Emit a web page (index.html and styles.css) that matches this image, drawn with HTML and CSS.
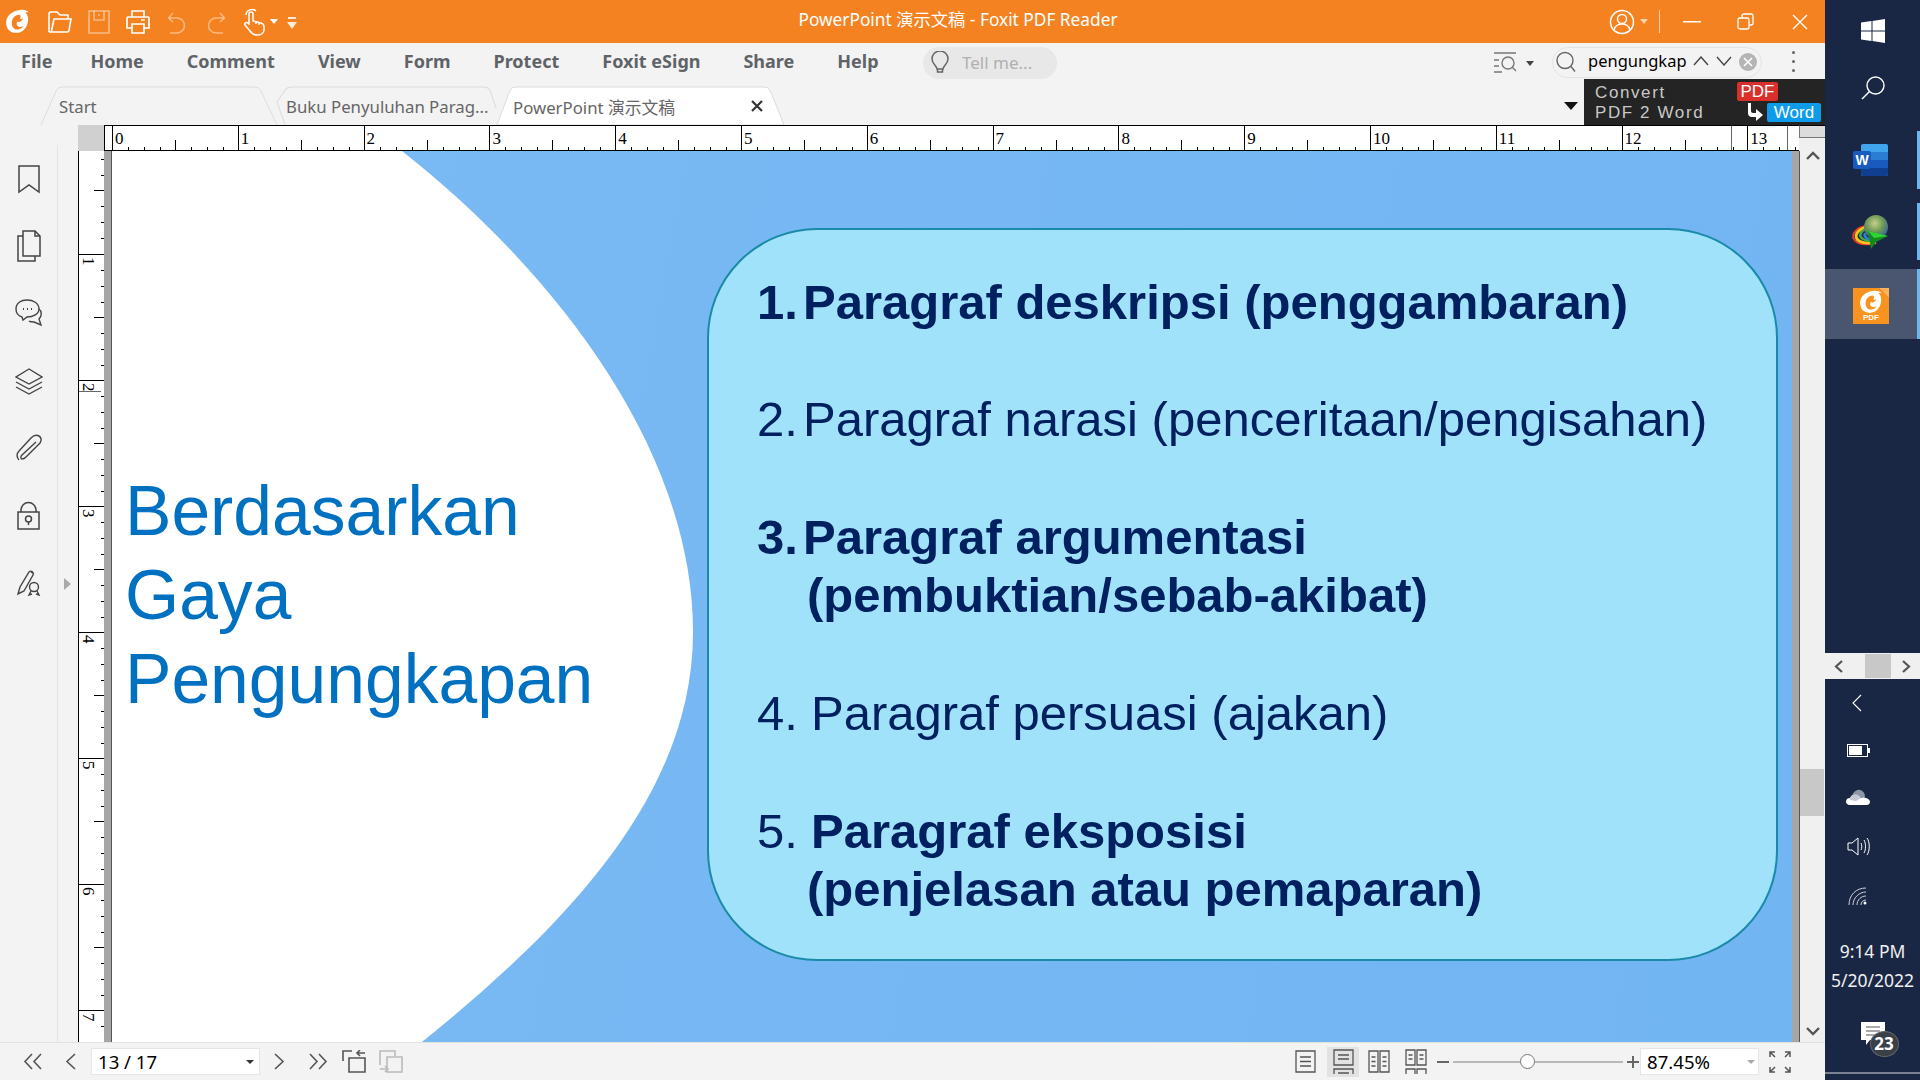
FILE: index.html
```html
<!DOCTYPE html>
<html>
<head>
    <meta charset="utf-8">
    <title>PowerPoint 演示文稿 - Foxit PDF Reader</title>
    <link rel="stylesheet" href="styles.css">
</head>
<body>
<div class="app">
    <!-- title bar -->
    <div class="titlebar">
        <div class="qat">
            <svg class="qa-logo" width="25" height="25" viewBox="1 2 22 22"><path fill="#fff" d="M13 3c4-1 7 0 9 2-2-.5-3 0-3 0 2 2 3 5 2 9-1 5-5 9-10 9-6 0-9-4-9-9C2 8 7 4 13 3z"/><path fill="#f58220" d="M14 7c-4 0-7 3-7 7s2 6 5 6c2 0 4-1 5-3-2 1-4 1-5 0s-1-3 0-4c2 1 4 0 5-3-1 1-2 1-3 1 1-2 1-3 0-4z"/></svg>
            <svg class="qa-folder" width="26" height="26" viewBox="0 0 26 26" fill="none" stroke="#fff" stroke-width="1.6"><path d="M2 23V5a2 2 0 0 1 2-2h6l3 3h8v4"/><path d="M2 23h18a2 2 0 0 0 2-1.500l2-11.500H7L4.500 22"/></svg>
            <svg class="qa-save" width="22" height="24" viewBox="0 0 22 24" fill="none" stroke="#fff" stroke-opacity=".45" stroke-width="1.6"><path d="M1 1h20v22H1z"/><path d="M6 1v9h10V1M10 5h2"/></svg>
            <svg class="qa-print" width="24" height="26" viewBox="0 0 24 26" fill="none" stroke="#fff" stroke-width="1.7"><path d="M6 8V2h12v6M6 19H1V9a1 1 0 0 1 1-1h20a1 1 0 0 1 1 1v10h-5"/><path d="M6 15h12v9H6zM15 11h4"/></svg>
            <svg class="qa-undo" width="20" height="24" viewBox="0 0 20 24" fill="none" stroke="#fff" stroke-opacity=".45" stroke-width="1.5"><path d="M2 8h8a7.500 7.500 0 0 1 0 15H3M6 3 1.500 8 6 12"/></svg>
            <svg class="qa-redo" width="20" height="24" viewBox="0 0 20 24" fill="none" stroke="#fff" stroke-opacity=".45" stroke-width="1.5"><path d="M18 8h-8a7.500 7.500 0 0 0 0 15h7M14 3l4.500 5L14 12"/></svg>
            <svg class="qa-hand" width="22" height="28" viewBox="0 0 22 28" fill="none" stroke="#fff" stroke-width="1.5"><path d="M6 17V6a2 2 0 0 1 4 0v7l8 2c2 .5 3 2 3 4v3c0 3-3 5-7 5-3 0-5-1-7-4l-5-6c-1-2 1-3 3-2l1 1"/><path d="M13 13v3M16 14v3M3 7a6 6 0 0 1 10-4"/></svg>
            <span class="caret-w"></span>
            <svg class="qa-more" width="10" height="12" viewBox="0 0 10 12" fill="#fff" fill-opacity=".85"><path d="M1 0h8v2H1zM0 5h10L5 12z"/></svg>
        </div>
        <div class="app-title">PowerPoint 演示文稿 - Foxit PDF Reader</div>
        <div class="win-btns">
            <svg width="26" height="26" viewBox="0 0 26 26" fill="none" stroke="#fff" stroke-width="1.5"><circle cx="13" cy="13" r="11.500"/><circle cx="13" cy="10" r="4.500"/><path d="M5 21c1-4 4-6 8-6s7 2 8 6"/></svg>
            <span class="caret-w faint"></span>
            <span class="win-sep"></span>
            <svg class="w-min" width="18" height="2" viewBox="0 0 18 2"><path fill="#fff" d="M0 0h18v1.500H0z"/></svg>
            <svg class="w-max" width="17" height="17" viewBox="0 0 17 17" fill="none" stroke="#fff" stroke-width="1.300"><rect x="1" y="5" width="11" height="11" rx="2"/><path d="M5 5V3a2 2 0 0 1 2-2h7a2 2 0 0 1 2 2v7a2 2 0 0 1-2 2h-2"/></svg>
            <svg class="w-close" width="16" height="16" viewBox="0 0 16 16" stroke="#fff" stroke-width="1.400"><path d="M1 1l14 14M15 1 1 15"/></svg>
        </div>
    </div>

    <!-- ribbon menu -->
    <div class="menubar">
        <nav class="menu">
            <a>File</a><a>Home</a><a>Comment</a><a>View</a><a>Form</a><a>Protect</a><a>Foxit eSign</a><a>Share</a><a>Help</a>
        </nav>
        <div class="tellme">
            <svg width="18" height="24" viewBox="0 0 18 24" fill="none" stroke="#666" stroke-width="1.500"><path d="M6 18c0-3-5-5-5-10a8 8 0 0 1 16 0c0 5-5 7-5 10zM6.500 18v3h5v-3"/></svg>
            <span>Tell me...</span>
        </div>
        <svg class="find-list" width="24" height="22" viewBox="0 0 24 22" fill="none" stroke="#777" stroke-width="1.400"><path d="M0 1h22M0 8h5M0 14h5M0 20h8"/><circle cx="14" cy="11" r="6"/><path d="M18.500 15.500 22 19"/></svg>
        <span class="caret-d"></span>
        <div class="searchbox">
            <svg width="20" height="22" viewBox="0 0 20 22" fill="none" stroke="#666" stroke-width="1.400"><circle cx="9" cy="9.500" r="8"/><path d="M15 15.500l4 5"/></svg>
            <span class="search-text">pengungkap</span>
            <svg class="chev-up" width="16" height="10" viewBox="0 0 16 10" fill="none" stroke="#444" stroke-width="1.400"><path d="M1 9l7-8 7 8"/></svg>
            <svg class="chev-dn" width="16" height="10" viewBox="0 0 16 10" fill="none" stroke="#444" stroke-width="1.400"><path d="M1 1l7 8 7-8"/></svg>
            <svg width="18" height="18" viewBox="0 0 18 18"><circle cx="9" cy="9" r="9" fill="#b4b4b4"/><path d="M5 5l8 8M13 5l-8 8" stroke="#fff" stroke-width="1.600"/></svg>
        </div>
        <div class="kebab"><i></i><i></i><i></i></div>
    </div>

    <!-- tabs -->
    <div class="tabbar">
        <div class="tab tab-start">
            <svg class="tab-bg" viewBox="0 0 243 39" preserveAspectRatio="none"><path d="M0 39 16 4q2-3 6-3h198q4 0 6 3l17 35" fill="none" stroke="#dcdcdc"/></svg>
            <span>Start</span>
        </div>
        <div class="tab tab-buku">
            <svg class="tab-bg" viewBox="0 0 216 39" preserveAspectRatio="none"><path d="M8 39 0 16 8 4q2-3 6-3h190q4 0 6 3l6 18" fill="none" stroke="#dcdcdc"/></svg>
            <span>Buku Penyuluhan Parag...</span>
        </div>
        <div class="tab tab-active">
            <svg class="tab-bg" viewBox="0 0 287 39" preserveAspectRatio="none"><path d="M0 39 13 4q2-3 6-3h248q4 0 6 3l14 35z" fill="#fff" stroke="#dcdcdc"/></svg>
            <span>PowerPoint 演示文稿</span>
            <svg class="tab-x" width="12" height="12" viewBox="0 0 12 12" stroke="#333" stroke-width="2.200"><path d="M1 1l10 10M11 1 1 11"/></svg>
        </div>
        <span class="tab-spacer"></span>
        <span class="tab-menu"></span>
        <div class="ad">
            <div class="ad-text"><span>Convert</span><span>PDF 2 Word</span></div>
            <span class="ad-pdf">PDF</span>
            <svg class="ad-arrow" width="17" height="18" viewBox="0 0 17 18" fill="#fff"><path d="M2 0h3v8c0 1 1 2 2 2h3V6l7 6-7 6v-4H6c-3 0-4-2-4-4z"/></svg>
            <span class="ad-word">Word</span>
        </div>
    </div>

    <!-- horizontal ruler row -->
    <div class="ruler-row">
        <span class="ruler-left"></span>
        <span class="ruler-corner"></span>
        <div class="hruler">
            <div class="hu">0</div><div class="hu">1</div><div class="hu">2</div><div class="hu">3</div>
            <div class="hu">4</div><div class="hu">5</div><div class="hu">6</div><div class="hu">7</div>
            <div class="hu">8</div><div class="hu">9</div><div class="hu">10</div><div class="hu">11</div>
            <div class="hu">12</div><div class="hu">13</div>
            <i class="hmark m1"></i><i class="hmark m2"></i>
        </div>
        <div class="scroll-head"><span></span></div>
    </div>

    <!-- document -->
    <div class="workspace">
        <aside class="sidebar">
            <svg width="24" height="30" viewBox="0 0 24 30" fill="none" stroke="#444" stroke-width="1.500"><path d="M2 2h20v26l-10-7-10 7z"/></svg>
            <svg width="24" height="32" viewBox="0 0 24 32" fill="none" stroke="#444" stroke-width="1.500"><path d="M6 1h12l5 5v20H6z"/><path d="M18 1v5h5M6 6H1v25h17v-5"/></svg>
            <svg width="28" height="28" viewBox="0 0 28 28" fill="none" stroke="#444" stroke-width="1.400"><path d="M12 1C6 1 1 4 1 10c0 4 3 7 6 8l1 3 4-3c6 0 12-3 12-8 0-6-6-9-12-9z"/><path d="M24 10c3 2 3 7 0 10l2 6-7-3c-2 0-4 0-5-1"/><path d="M8 10h1M12 10h1M16 10h1" stroke-width="2"/></svg>
            <svg width="28" height="28" viewBox="0 0 28 28" fill="none" stroke="#444" stroke-width="1.400"><path d="M14 2 1 10l13 7 13-7zM1 15l13 7 13-7M1 20l13 7 13-7"/></svg>
            <svg width="26" height="28" viewBox="0 0 26 28" fill="none" stroke="#444" stroke-width="1.400"><path d="M20 8 6 21c-2 2-1 4 0 4s2 0 4-2L24 9c2-3 1-6-1-7s-5-1-8 2L3 17c-3 3-2 7 0 9"/></svg>
            <svg width="23" height="29" viewBox="0 0 23 29" fill="none" stroke="#444" stroke-width="1.500"><path d="M1 11h21v17H1zM4 11V9a7.500 7.500 0 0 1 15 0v2"/><circle cx="11.500" cy="18" r="3"/><path d="M11.500 21v3"/></svg>
            <svg width="24" height="26" viewBox="0 0 24 26" fill="none" stroke="#444" stroke-width="1.400"><path d="M1 24l2-7L12 2c2-2 5 0 4 3L7 21zM14 2l3 2"/><circle cx="17" cy="17" r="4.500"/><path d="M14 21l-2 4 3-1M20 21l2 4-3-1"/></svg>
        </aside>
        <div class="side-toggle"><span></span></div>
        <div class="vruler">
            <div class="vu first"></div>
            <div class="vu"><b>1</b></div><div class="vu"><b>2</b></div><div class="vu"><b>3</b></div>
            <div class="vu"><b>4</b></div><div class="vu"><b>5</b></div><div class="vu"><b>6</b></div>
            <div class="vu"><b>7</b></div>
            <i class="vmark"></i>
        </div>
        <span class="page-edge"></span>
        <section class="slide">
            <svg class="slide-shape" viewBox="0 0 1680 891" preserveAspectRatio="none"><path fill="#fff" d="M0 0H290C430 110 581 290 581 481C581 640 460 770 310 891H0Z"/></svg>
            <h1 class="slide-title">Berdasarkan<br>Gaya<br>Pengungkapan</h1>
            <div class="slide-box">
                <div class="li b"><span class="n">1.</span><span>Paragraf deskripsi (penggambaran)</span></div>
                <div class="li"><span class="n">2.</span><span>Paragraf narasi (penceritaan/pengisahan)</span></div>
                <div class="li b"><span class="n">3.</span><span>Paragraf argumentasi<br><span class="cont">(pembuktian/sebab-akibat)</span></span></div>
                <div class="li wide"><span class="n">4.</span><span>Paragraf persuasi (ajakan)</span></div>
                <div class="li wide"><span class="n">5.</span><span class="bold">Paragraf eksposisi<br><span class="cont">(penjelasan atau pemaparan)</span></span></div>
            </div>
        </section>
        <span class="page-edge"></span>
        <div class="vscroll">
            <svg width="14" height="9" viewBox="0 0 14 9" fill="none" stroke="#555" stroke-width="2.400"><path d="M1 8l6-6 6 6"/></svg>
            <span class="thumb"></span>
            <svg width="14" height="9" viewBox="0 0 14 9" fill="none" stroke="#555" stroke-width="2.400"><path d="M1 1l6 6 6-6"/></svg>
        </div>
    </div>

    <!-- status bar -->
    <div class="statusbar">
        <svg class="s-first" width="20" height="17" viewBox="0 0 20 17" fill="none" stroke="#555" stroke-width="1.600"><path d="M9 1 2 8.500 9 16M18 1l-7 7.500 7 7.500"/></svg>
        <svg class="s-prev" width="11" height="17" viewBox="0 0 11 17" fill="none" stroke="#555" stroke-width="1.600"><path d="M10 1 2 8.500l8 7.500"/></svg>
        <div class="pagebox"><span>13 / 17</span><i></i></div>
        <svg class="s-next" width="11" height="17" viewBox="0 0 11 17" fill="none" stroke="#555" stroke-width="1.600"><path d="M1 1l8 7.500L1 16"/></svg>
        <svg class="s-last" width="20" height="17" viewBox="0 0 20 17" fill="none" stroke="#555" stroke-width="1.600"><path d="M2 1l7 7.500L2 16M11 1l7 7.500-7 7.500"/></svg>
        <svg class="s-hist" width="24" height="23" viewBox="0 0 24 23" fill="none" stroke="#555" stroke-width="1.600"><path d="M1 11V1h9M7 8h16v14H7zM23 3h-8M18 0l-3 3 3 3"/></svg>
        <svg class="s-hist2" width="24" height="23" viewBox="0 0 24 23" fill="none" stroke="#bbb" stroke-width="1.600"><path d="M1 15V1h15v5M8 7h15v15H8zM1 19h8M6 16l3 3-3 3"/></svg>
        <span class="status-spacer"></span>
        <svg class="v1" width="21" height="23" viewBox="0 0 21 23" fill="none" stroke="#555" stroke-width="1.300"><path d="M1 1h19v21H1zM5 7h11M5 11.500h11M5 16h11"/></svg>
        <span class="view-on"><svg width="21" height="25" viewBox="0 0 21 25" fill="none" stroke="#555" stroke-width="1.300"><path d="M1 1h19v15H1zM5 6h11M5 10h11M1 25v-5h19v5M5 24h11"/></svg></span>
        <svg class="v3" width="22" height="23" viewBox="0 0 22 23" fill="none" stroke="#555" stroke-width="1.300"><path d="M1 1h9v21H1zM12 1h9v21h-9zM3.500 7h4M3.500 11.500h4M3.500 16h4M14.500 7h4M14.500 11.500h4M14.500 16h4"/></svg>
        <svg class="v4" width="22" height="25" viewBox="0 0 22 25" fill="none" stroke="#555" stroke-width="1.300"><path d="M1 1h9v15H1zM12 1h9v15h-9zM3.500 6h4M3.500 10h4M14.500 6h4M14.500 10h4M1 25v-5h9v5M12 25v-5h9v5"/></svg>
        <span class="z-minus"></span>
        <div class="slider"><span class="knob"></span></div>
        <svg class="z-plus" width="12" height="12" viewBox="0 0 12 12"><path fill="#666" d="M5 0h2v5h5v2H7v5H5V7H0V5h5z"/></svg>
        <div class="zoombox"><span>87.45%</span><i></i></div>
        <svg class="s-full" width="22" height="22" viewBox="0 0 22 22" fill="none" stroke="#555" stroke-width="1.500"><path d="M1 6V1h5M1 1l5 5M21 6V1h-5M21 1l-5 5M1 16v5h5M1 21l5-5M21 16v5h-5M21 21l-5-5"/></svg>
    </div>
</div>

<!-- windows taskbar on the right -->
<aside class="taskbar">
    <div class="tb-start">
        <svg width="24" height="24" viewBox="0 0 24 24" fill="#fff"><path d="M0 3.500 10.500 2v9.500H0zM11.500 1.900 24 0v11.500H11.500zM0 12.500h10.500V22L0 20.500zM11.500 12.500H24V24l-12.500-1.900z"/></svg>
    </div>
    <div class="tb-search">
        <svg width="24" height="24" viewBox="0 0 24 24" fill="none" stroke="#fff" stroke-width="1.400"><circle cx="14.500" cy="9.500" r="8.500"/><path d="M8.500 15.500 1 23"/></svg>
    </div>
    <div class="tb-app tb-word">
        <svg width="36" height="32" viewBox="0 0 36 32"><rect x="8" y="0" width="27" height="32" rx="2" fill="#41a5ee"/><path fill="#2b7cd3" d="M8 8h27v8H8z"/><path fill="#185abd" d="M8 16h27v8H8z"/><path fill="#103f91" d="M8 24h27v6a2 2 0 0 1-2 2H10a2 2 0 0 1-2-2z"/><rect x="0" y="7" width="18" height="18" rx="2" fill="#185abd"/><text x="9" y="21" text-anchor="middle" font-family="Liberation Sans" font-weight="700" font-size="14" fill="#fff">W</text></svg>
    </div>
    <div class="tb-app tb-idm">
        <svg width="38" height="34" viewBox="0 0 38 34"><defs><radialGradient id="globe" cx=".45" cy=".35" r=".7"><stop offset="0" stop-color="#c8cf8a"/><stop offset=".5" stop-color="#6f9a55"/><stop offset="1" stop-color="#2c5aa8"/></radialGradient></defs><path d="M24 28C8 32-2 26 2 18c2-4 8-7 14-7" fill="none" stroke="#e53a2c" stroke-width="2"/><path d="M24 27C10 30 1 25 5 18c2-3 6-5 11-6" fill="none" stroke="#f6c21c" stroke-width="3"/><path d="M24 26C13 27 6 23 9 18c1-2 4-4 7-4" fill="none" stroke="#3fae49" stroke-width="2.500"/><path d="M24 25C16 25 11 22 13 18" fill="none" stroke="#2f7ed8" stroke-width="2.500"/><circle cx="24" cy="12" r="12" fill="url(#globe)"/><path d="M36 21 16 16l3 18 5-7z" fill="#138a1c"/><path d="M36 21 16 16l6 7z" fill="#2fd335"/></svg>
    </div>
    <div class="tb-app tb-foxit">
        <div class="fx-tile">
            <svg width="24" height="24" viewBox="1 2 22 22"><path fill="#fff" d="M13 3c4-1 7 0 9 2-2-.5-3 0-3 0 2 2 3 5 2 9-1 5-5 9-10 9-6 0-9-4-9-9C2 8 7 4 13 3z"/><path fill="#f7931e" d="M14 7c-4 0-7 3-7 7s2 6 5 6c2 0 4-1 5-3-2 1-4 1-5 0s-1-3 0-4c2 1 4 0 5-3-1 1-2 1-3 1 1-2 1-3 0-4z"/></svg>
            <span>PDF</span>
        </div>
    </div>
    <span class="tb-fill"></span>
    <div class="tb-scroller">
        <svg width="9" height="13" viewBox="0 0 9 13" fill="none" stroke="#555" stroke-width="2.200"><path d="M8 1 2 6.500 8 12"/></svg>
        <span class="tb-thumb"></span>
        <svg width="9" height="13" viewBox="0 0 9 13" fill="none" stroke="#555" stroke-width="2.200"><path d="M1 1l6 5.500L1 12"/></svg>
    </div>
    <div class="tray">
        <svg class="tray-chev" width="10" height="18" viewBox="0 0 10 18" fill="none" stroke="#fff" stroke-width="1.100"><path d="M9 1 1 9l8 8"/></svg>
        <svg class="tray-batt" width="23" height="13" viewBox="0 0 23 13"><rect x=".5" y=".5" width="20" height="12" fill="none" stroke="#fff"/><rect x="2" y="2" width="13" height="9" fill="#fff"/><rect x="21" y="4" width="2" height="5" fill="#fff"/></svg>
        <svg class="tray-cloud" width="24" height="16" viewBox="0 0 24 16"><path fill="#8e96a8" d="M6 9C6 4 10 0 14 1c3 .7 5 3 5 7z"/><path fill="#fff" d="M4 16C1 16 0 14 0 12.500 0 10 2 9 4 9c1-3 4-4 7-3 2 1 3 2 4 3 1-1 3-1 5 0 2 .5 4 2 4 4 0 2-2 3-3 3z"/><path fill="#c4c8d2" d="M4 9c1-3 4-4 7-3 2 1 3 2 4 3l-5 3-6-1z"/></svg>
        <svg class="tray-vol" width="23" height="19" viewBox="0 0 23 19" fill="none" stroke="#fff" stroke-width="1"><path d="M1 6h4l6-5v17l-6-5H1zM14 6c1 2 1 5 0 7M17 3c2 3 2 10 0 13M20 1c3 4 3 13 0 17"/></svg>
        <svg class="tray-wifi" width="20" height="18" viewBox="0 0 20 18" fill="none" stroke="#ccd0d8" stroke-width="1"><path d="M1 18C1 8 8 1 18 1M5 18c0-7 6-13 13-13M9 18c0-5 4-9 9-9M13 18c0-3 2-5 5-5"/><circle cx="17" cy="16" r="1.500" fill="#fff" stroke="none"/></svg>
        <div class="clock"><span>9:14 PM</span><span>5/20/2022</span></div>
        <div class="notif">
            <svg width="24" height="23" viewBox="0 0 24 23"><path fill="#fff" d="M0 0h24v18H9l-4 5v-5H0z"/><path stroke="#555" d="M5 5h14M5 9h14M5 13h10"/></svg>
            <span class="notif-badge">23</span>
        </div>
    </div>
    <span class="tb-line"></span>
</aside>
</body>
</html>
```

FILE: styles.css
```css
html, body {
    margin: 0;
    height: 100%;
    overflow: hidden;
}

body {
    display: flex;
    width: 1920px;
    height: 1080px;
    font-family: "Noto Sans", "Noto Sans CJK SC", sans-serif;
    background: #f3f3f3;
}

svg {
    display: block;
    flex: none;
}

.app {
    width: 1825px;
    display: flex;
    flex-direction: column;
}

/* title bar */
.titlebar {
    height: 43px;
    background: #f58220;
    display: flex;
    align-items: center;
    color: #fff;
}

.qat {
    width: 310px;
    display: flex;
    align-items: center;
    padding-left: 5px;
    box-sizing: border-box;
}

.qa-folder { margin-left: 17px; }
.qa-save { margin-left: 15px; }
.qa-print { margin-left: 16px; }
.qa-undo { margin-left: 17px; }
.qa-redo { margin-left: 19px; }
.qa-hand { margin-left: 17px; }
.qa-more { margin-left: 9px; margin-top: 3px; }

.caret-w {
    margin-left: 5px;
    border-left: 4px solid transparent;
    border-right: 4px solid transparent;
    border-top: 5px solid #fff;
}

.caret-w.faint {
    border-top-color: #fbd4ac;
}

.app-title {
    flex: 1;
    text-align: center;
    font-size: 17.3px;
    line-height: 40px;
    height: 43px;
    padding-left: 6px;
}

.win-btns {
    width: 225px;
    box-sizing: border-box;
    padding-left: 9px;
    display: flex;
    align-items: center;
}

.win-sep {
    width: 1px;
    height: 23px;
    background: #fbd4ac;
    margin-left: 11px;
}

.w-min { margin-left: 23px; }
.w-max { margin-left: 36px; }
.w-close { margin-left: 38px; }

/* menu row */
.menubar {
    height: 36px;
    display: flex;
    align-items: center;
    position: relative;
}

.menu {
    width: 923px;
    display: flex;
    gap: 43px;
    padding-left: 21px;
    box-sizing: border-box;
    font-size: 18px;
    font-weight: 700;
    color: #5f6368;
}

.menu a:first-child {
    margin-right: -5px;
}

.tellme {
    width: 134px;
    height: 32px;
    margin-top: 3px;
    background: #e8e8e8;
    border-radius: 16px;
    display: flex;
    align-items: center;
    gap: 13px;
    padding-left: 8px;
    box-sizing: border-box;
    font-size: 17px;
    color: #b0b0b0;
}

.find-list {
    margin-left: 437px;
    margin-top: 4px;
}

.caret-d {
    margin-left: 8px;
    margin-top: 4px;
    border-left: 4px solid transparent;
    border-right: 4px solid transparent;
    border-top: 5px solid #444;
}

.searchbox {
    width: 210px;
    height: 31px;
    margin-left: 18px;
    margin-top: 2px;
    border: 1px solid #e4e4e4;
    border-radius: 16px;
    display: flex;
    align-items: center;
    padding-left: 3px;
    box-sizing: border-box;
    font-size: 16.5px;
    color: #000;
}

.search-text {
    margin: -3px 0 0 12px;
    width: 105px;
}

.chev-up, .chev-dn { margin-top: -2px; }
.chev-dn { margin-left: 7px; }
.searchbox svg:last-child { margin-left: 7px; }

.kebab {
    margin-left: 30px;
    display: flex;
    flex-direction: column;
    gap: 6px;
}

.kebab i {
    width: 3px;
    height: 3px;
    border-radius: 50%;
    background: #666;
}

/* tabs */
.tabbar {
    height: 46px;
    display: flex;
    align-items: flex-end;
    padding-left: 41px;
    font-size: 16.8px;
    color: #666;
}

.tab {
    height: 39px;
    position: relative;
    display: flex;
    align-items: center;
    box-sizing: border-box;
}

.tab span {
    position: relative;
    white-space: nowrap;
    top: 1px;
}

.tab-bg {
    position: absolute;
    inset: 0;
    width: 100%;
    height: 100%;
    overflow: visible;
}

.tab-start { width: 236px; padding-left: 18px; }
.tab-buku { width: 219px; padding-left: 9px; margin-left: 0; }
.tab-active { width: 287px; padding-left: 16px; margin-left: 1px; }

.tab-x {
    position: absolute;
    right: 21px;
    top: 14px;
}

.tab-spacer { flex: 1; }

.tab-menu {
    margin: 0 6px 15px 0;
    border-left: 7px solid transparent;
    border-right: 7px solid transparent;
    border-top: 8px solid #111;
}

.ad {
    width: 241px;
    height: 46px;
    background: #242424;
    position: relative;
    font-family: "Liberation Sans", sans-serif;
    color: #c8c8c8;
}

.ad-text {
    display: flex;
    flex-direction: column;
    padding: 4px 0 0 11px;
    font-size: 17px;
    line-height: 20px;
    letter-spacing: 1.6px;
}

.ad-pdf, .ad-word {
    position: absolute;
    color: #fff;
    font-size: 17px;
    text-align: center;
    border-radius: 2px;
}

.ad-pdf {
    left: 153px;
    top: 3px;
    width: 41px;
    line-height: 19px;
    background: #d9302c;
}

.ad-word {
    left: 183px;
    top: 24px;
    width: 54px;
    line-height: 19px;
    background: #0f9bec;
}

.ad-arrow {
    position: absolute;
    left: 162px;
    top: 24px;
}

/* rulers */
.ruler-row {
    height: 26px;
    display: flex;
}

.ruler-left { width: 78px; }

.ruler-corner {
    width: 26px;
    background: #d0d0d0;
}

.hruler {
    width: 1695px;
    box-sizing: border-box;
    background: #fff;
    border-top: 1px solid #000;
    border-bottom: 1px solid #000;
    border-left: 1px solid #000;
    padding-left: 7px;
    display: flex;
    overflow: hidden;
    position: relative;
}

.hu {
    flex: none;
    width: 125.8px;
    box-sizing: border-box;
    border-left: 1px solid #000;
    padding-left: 2px;
    font: 17px/25px "Liberation Serif", serif;
    color: #000;
    background:
        linear-gradient(#000, #000) 62px 100% / 1px 10px no-repeat,
        linear-gradient(to right,
            transparent 15px, #000 15px 16px,
            transparent 16px 31px, #000 31px 32px,
            transparent 32px 47px, #000 47px 48px,
            transparent 48px 78px, #000 78px 79px,
            transparent 79px 94px, #000 94px 95px,
            transparent 95px 110px, #000 110px 111px,
            transparent 111px) 0 100% / 100% 3px no-repeat;
}

.hmark {
    position: absolute;
    top: 0;
    bottom: 0;
    width: 1px;
    background: #666;
}

.m1 { left: 1626px; }
.m2 { left: 1682px; }

.scroll-head {
    flex: 1;
    background: #f0f0f0;
}

.scroll-head span {
    display: block;
    height: 11px;
    background: #dcdcdc;
    border: 1px solid #777;
    border-right: 0;
    border-top-color: #000;
}

.workspace {
    flex: 1;
    display: flex;
    min-height: 0;
}

.sidebar {
    width: 58px;
    margin-top: -6px;
    box-sizing: border-box;
    border-right: 1px solid #e4e4e4;
    display: grid;
    grid-auto-rows: 67.4px;
    align-items: center;
    justify-items: center;
    align-content: start;
}

.side-toggle {
    width: 20px;
    display: flex;
    align-items: flex-start;
    padding: 427px 0 0 6px;
    box-sizing: border-box;
}

.side-toggle span {
    border-top: 6px solid transparent;
    border-bottom: 6px solid transparent;
    border-left: 7px solid #aaa;
}

.vruler {
    width: 26px;
    box-sizing: border-box;
    background: #fff;
    border-left: 1px solid #000;
    overflow: hidden;
    position: relative;
}

.vu {
    height: 126px;
    box-sizing: border-box;
    border-top: 1px solid #000;
    padding: 2px 0 0 1px;
    background:
        linear-gradient(#000, #000) 100% 62px / 10px 1px no-repeat,
        linear-gradient(to bottom,
            transparent 15px, #000 15px 16px,
            transparent 16px 31px, #000 31px 32px,
            transparent 32px 47px, #000 47px 48px,
            transparent 48px 78px, #000 78px 79px,
            transparent 79px 94px, #000 94px 95px,
            transparent 95px 110px, #000 110px 111px,
            transparent 111px) 100% 0 / 3px 100% no-repeat;
}

.vu.first {
    height: 103px;
    border-top: 0;
    background-position: 100% 39px, 100% -23px;
    background-size: 10px 1px, 3px 126px;
}

.vu b {
    display: block;
    writing-mode: vertical-rl;
    font: 17px/16px "Liberation Serif", serif;
}

.vmark {
    position: absolute;
    left: 0;
    top: 240px;
    width: 22px;
    height: 1px;
    background: #666;
}

.page-edge {
    width: 8px;
    background: #a6a6a6;
    border-right: 1px solid #555;
    box-sizing: border-box;
    flex: none;
}

/* the slide */
.slide {
    width: 1680px;
    flex: none;
    position: relative;
    display: flex;
    align-items: center;
    background: linear-gradient(100deg, #7abaf4, #72b5f3);
    font-family: "Liberation Sans", sans-serif;
}

.slide-shape {
    position: absolute;
    inset: 0;
    width: 100%;
    height: 100%;
}

.slide-title {
    position: relative;
    width: 596px;
    box-sizing: border-box;
    margin: -3px 0 0;
    padding-left: 13px;
    font-size: 69.6px;
    line-height: 84px;
    font-weight: 400;
    color: #0070c0;
}

.slide-box {
    position: relative;
    width: 1071px;
    height: 733px;
    margin: -4px 0 0 -1px;
    box-sizing: border-box;
    padding: 42.5px 0 0 48px;
    background: #9fe2f9;
    border: 2px solid #1a8aa8;
    border-radius: 110px;
    font-size: 49px;
    line-height: 58.8px;
    color: #002060;
}

.li {
    display: flex;
    margin-bottom: 58.8px;
    white-space: nowrap;
}

.li .n {
    width: 46px;
    flex: none;
}

.li.wide .n { width: 54px; }
.li.b { font-weight: 700; }
.bold { font-weight: 700; }

.cont {
    display: inline-block;
    margin-left: 4px;
}

.li.wide .cont { margin-left: -4px; }

.vscroll {
    flex: 1;
    background: #f0f0f0;
    position: relative;
}

.vscroll svg:first-child {
    position: absolute;
    top: 0;
    left: 6px;
}

.vscroll svg:last-child {
    position: absolute;
    bottom: 6px;
    left: 6px;
}

.thumb {
    position: absolute;
    top: 618px;
    left: 0;
    width: 24px;
    height: 47px;
    background: #c8c8c8;
}

/* status bar */
.statusbar {
    height: 38px;
    border-top: 1px solid #e2e2e2;
    box-sizing: border-box;
    display: flex;
    align-items: center;
    font-size: 18.6px;
    color: #000;
    padding-left: 23px;
}

.s-prev { margin-left: 22px; }

.pagebox, .zoombox {
    height: 27px;
    background: #fff;
    border: 1px solid #e6e6e6;
    box-sizing: border-box;
    display: flex;
    align-items: center;
    justify-content: space-between;
}

.pagebox {
    width: 169px;
    margin-left: 15px;
    padding: 0 5px 0 6px;
}

.pagebox i {
    border-left: 4px solid transparent;
    border-right: 4px solid transparent;
    border-top: 4px solid #333;
}

.s-next { margin-left: 14px; }
.s-last { margin-left: 23px; }
.s-hist { margin-left: 14px; }
.s-hist2 { margin-left: 13px; }
.status-spacer { flex: 1; }

.v1 { margin-right: 11px; }

.view-on {
    width: 32px;
    height: 30px;
    background: #e2e2e2;
    display: flex;
    align-items: center;
    justify-content: center;
}

.v3 { margin-left: 9px; }
.v4 { margin-left: 15px; }

.z-minus {
    width: 12px;
    height: 2px;
    background: #666;
    margin-left: 10px;
}

.slider {
    width: 170px;
    height: 2px;
    background: #b8b8b8;
    margin-left: 4px;
    display: flex;
    align-items: center;
    padding-left: 67px;
    box-sizing: border-box;
}

.knob {
    width: 15px;
    height: 15px;
    flex: none;
    box-sizing: border-box;
    border-radius: 50%;
    background: #fff;
    border: 1px solid #777;
}

.z-plus { margin-left: 4px; }

.zoombox {
    width: 119px;
    margin-left: 1px;
    padding: 0 3px 0 6px;
}

.zoombox i {
    border-left: 4px solid transparent;
    border-right: 4px solid transparent;
    border-top: 4px solid #aaa;
}

.s-full { margin: 0 34px 0 10px; }

/* taskbar */
.taskbar {
    width: 95px;
    background: #1a2744;
    display: flex;
    flex-direction: column;
    position: relative;
    color: #f0f0f0;
}

.tb-start, .tb-search, .tb-app {
    display: flex;
    align-items: center;
    justify-content: center;
    flex: none;
}

.tb-start { height: 62px; }
.tb-search { height: 52px; }

.tb-app {
    box-sizing: border-box;
    border-right: 3px solid #6fb7ea;
}

.tb-word { height: 58px; margin: 17px 0 0; }
.tb-idm { height: 57px; margin: 14px 0 0; }
.tb-foxit { height: 70px; margin-top: 9px; background: #4a5670; }

.fx-tile {
    width: 36px;
    height: 36px;
    margin-top: 3px;
    background: linear-gradient(225deg, #ffb35c 7px, #f7931e 7px);
    display: flex;
    flex-direction: column;
    align-items: center;
    padding-top: 2px;
    box-sizing: border-box;
    color: #fff;
    font: 700 8px/8px "Liberation Sans", sans-serif;
}

.tb-fill { height: 314px; }

.tb-scroller {
    height: 26px;
    background: #f0f0f0;
    display: flex;
    align-items: center;
    padding-left: 9px;
}

.tb-thumb {
    width: 26px;
    height: 24px;
    background: #c8c8c8;
    margin: 0 11px 0 22px;
}

.tray {
    display: flex;
    flex-direction: column;
    align-items: center;
    position: relative;
    flex: 1;
}

.tray svg {
    margin-left: -29px;
}

.tray-chev { margin: 15px 0 0 -32px !important; }
.tray-batt { margin-top: 32px; }
.tray-cloud { margin-top: 32px; }
.tray-vol { margin-top: 32px; }
.tray-wifi { margin-top: 31px; }

.clock {
    margin-top: 35px;
    display: flex;
    flex-direction: column;
    align-items: center;
    gap: 7px;
    font-size: 17.5px;
    line-height: 22px;
    white-space: nowrap;
}

.notif {
    margin-top: 31px;
    position: relative;
}

.notif svg { margin: 0; }

.notif-badge {
    position: absolute;
    left: 9px;
    top: 9px;
    width: 29px;
    height: 26px;
    border-radius: 50%;
    background: #3a4048;
    border: 1px solid #666;
    box-sizing: border-box;
    text-align: center;
    color: #fff;
    font-size: 17px;
    font-weight: 700;
    line-height: 24px;
}

.tb-line {
    position: absolute;
    left: 0;
    right: 0;
    top: 1072px;
    height: 2px;
    background: #7a8292;
}
```
